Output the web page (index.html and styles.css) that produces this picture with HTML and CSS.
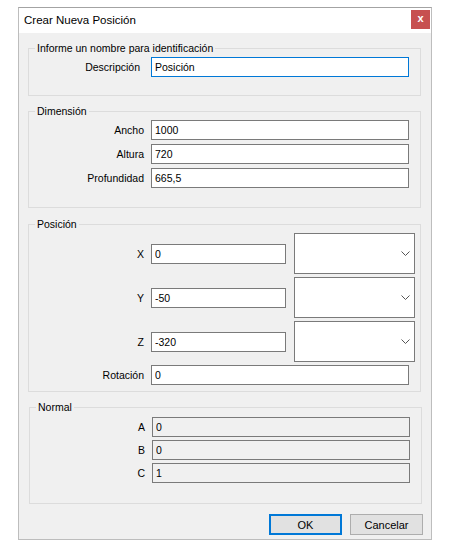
FILE: index.html
```html
<!DOCTYPE html>
<html lang="es">
<head>
  <meta charset="UTF-8" />
  <title>Crear Nueva Posición</title>
  <link rel="stylesheet" href="styles.css">
</head>
<body>

  <div class="dialog">
    <div class="titlebar">
      <span class="title">Crear Nueva Posición</span>
      <div class="close">x</div>
    </div>

    <div class="content">
      <fieldset class="group group-name">
        <legend>Informe un nombre para identificación</legend>
        <div class="row">
          <label class="lbl-desc">Descripción</label>
          <input class="field focus" value="Posición">
        </div>
      </fieldset>

      <fieldset class="group group-dim">
        <legend>Dimensión</legend>
        <div class="rows">
          <div class="row"><label>Ancho</label><input class="field" value="1000"></div>
          <div class="row"><label>Altura</label><input class="field" value="720"></div>
          <div class="row"><label>Profundidad</label><input class="field" value="665,5"></div>
        </div>
      </fieldset>

      <fieldset class="group group-pos">
        <legend>Posición</legend>
        <div class="rows">
          <div class="row pos-row">
            <label>X</label><input class="field" value="0">
            <div class="combo"><svg width="9" height="5" viewBox="0 0 9 5"><polyline points="0.5,0.5 4.5,4.5 8.5,0.5" fill="none" stroke="#555" stroke-width="1"/></svg></div>
          </div>
          <div class="row pos-row">
            <label>Y</label><input class="field" value="-50">
            <div class="combo"><svg width="9" height="5" viewBox="0 0 9 5"><polyline points="0.5,0.5 4.5,4.5 8.5,0.5" fill="none" stroke="#555" stroke-width="1"/></svg></div>
          </div>
          <div class="row pos-row">
            <label>Z</label><input class="field" value="-320">
            <div class="combo"><svg width="9" height="5" viewBox="0 0 9 5"><polyline points="0.5,0.5 4.5,4.5 8.5,0.5" fill="none" stroke="#555" stroke-width="1"/></svg></div>
          </div>
          <div class="row"><label>Rotación</label><input class="field" value="0"></div>
        </div>
      </fieldset>

      <fieldset class="group group-normal">
        <legend>Normal</legend>
        <div class="rows">
          <div class="row"><label>A</label><input class="field readonly" value="0" readonly></div>
          <div class="row"><label>B</label><input class="field readonly" value="0" readonly></div>
          <div class="row"><label>C</label><input class="field readonly" value="1" readonly></div>
        </div>
      </fieldset>

      <div class="buttons">
        <button class="btn btn-default">OK</button>
        <button class="btn">Cancelar</button>
      </div>
    </div>
  </div>

</body>
</html>
```

FILE: styles.css
```css
body {
  background-color: white;
  margin: 0;
  padding: 0;
  font-family: "Liberation Sans", Arial, sans-serif;
  font-size: 10.5px;
  color: black;
}

.dialog {
  width: 414px;
  height: 533px;
  margin: 7px 0 0 18px;
  box-sizing: border-box;
  border: 1px solid #bdbdbd;
  border-top-color: #a3a3a3;
  display: flex;
  flex-direction: column;
}

.titlebar {
  height: 25px;
  background-color: white;
  display: flex;
  align-items: center;
  padding-left: 5px;
}

.title {
  flex: 1;
  font-size: 11.5px;
  padding-bottom: 2px;
}

.close {
  align-self: flex-start;
  width: 19px;
  height: 19px;
  margin: 2px 1px 0 0;
  background-color: #c75050;
  color: white;
  font-weight: bold;
  font-size: 11px;
  line-height: 17px;
  text-align: center;
}

.content {
  flex: 1;
  background-color: #f0f0f0;
  padding: 8px 0 3px 0;
}

.group {
  border: 1px solid #dcdcdc;
  margin: 0 10px 0 9px;
  padding: 1px 10px 18px 0;
  min-width: 0;
}

.group legend {
  margin-left: 6px;
  padding: 0 2px;
  height: 15px;
  line-height: 15px;
}

.group-dim {
  margin-top: 8px;
  padding-bottom: 19px;
}

.group-pos {
  margin-top: 9px;
  padding-right: 4px;
  padding-bottom: 6px;
}

.group-normal {
  margin: 8px 9px 0 10px;
  padding-top: 2px;
  padding-bottom: 20px;
}

.rows {
  display: flex;
  flex-direction: column;
  gap: 4px;
}

.group-pos .rows,
.group-normal .rows {
  gap: 3px;
}

.row {
  display: flex;
  align-items: center;
  gap: 7px;
}

.row label {
  width: 115px;
  text-align: right;
}

.row .lbl-desc {
  width: 111px;
  padding-right: 4px;
}

.field {
  width: 258px;
  height: 20px;
  box-sizing: border-box;
  border: 1px solid #7a7a7a;
  background-color: white;
  padding: 0 3px;
  margin: 0;
  font-family: inherit;
  font-size: 10.5px;
  color: black;
  outline: none;
}

.field.focus {
  border-color: #0078d7;
}

.field.readonly {
  background-color: #f0f0f0;
}

.pos-row .field {
  width: 135px;
}

.combo {
  width: 121px;
  height: 41px;
  margin-left: 1px;
  box-sizing: border-box;
  border: 1px solid #7a7a7a;
  background-color: white;
  display: flex;
  align-items: center;
  justify-content: flex-end;
  padding-right: 4px;
}

.buttons {
  display: flex;
  justify-content: flex-end;
  gap: 8px;
  margin-top: 10px;
  padding-right: 8px;
}

.btn {
  width: 73px;
  height: 21px;
  box-sizing: border-box;
  border: 1px solid #adadad;
  background-color: #e1e1e1;
  font-family: inherit;
  font-size: 11px;
  color: black;
  padding: 0;
}

.btn-default {
  border: 2px solid #0078d7;
}
```
